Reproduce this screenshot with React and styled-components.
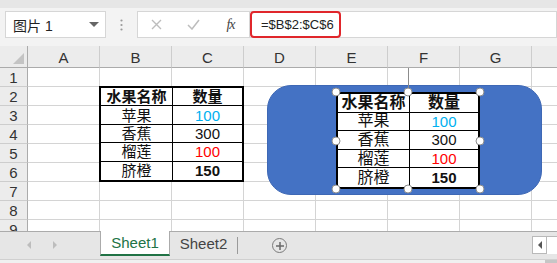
import React from "react";
import styled, { createGlobalStyle } from "styled-components";

const GlobalStyle = createGlobalStyle`
  body {
    margin: 0;
    background: #fff;
    font-family: "Liberation Sans", "Noto Sans CJK SC", sans-serif;
  }
`;

const Window = styled.div`
  width: 557px;
  height: 263px;
  overflow: hidden;
  display: flex;
  flex-direction: column;
  background: #f3f3f3;
`;

/* formula bar */
const FormulaBar = styled.div`
  height: 46px;
  box-sizing: border-box;
  border-top: 8px solid #e6e6e6;
  padding-top: 3px;
  display: flex;
  align-items: flex-start;
  flex-shrink: 0;
`;

const NameBox = styled.div`
  margin-left: 5px;
  width: 101px;
  height: 27px;
  box-sizing: border-box;
  background: #fff;
  border: 1px solid #d6d6d6;
  display: flex;
  align-items: center;
  padding: 0 6px 0 7px;
  font-size: 14px;
  color: #222;
`;

const Caret = styled.span`
  margin-left: auto;
  width: 0;
  height: 0;
  border-left: 5px solid transparent;
  border-right: 5px solid transparent;
  border-top: 5px solid #666;
`;

const Grip = styled.div`
  width: 31px;
  height: 27px;
  display: flex;
  align-items: center;
  justify-content: center;
`;

const FxGroup = styled.div`
  width: 113px;
  height: 27px;
  box-sizing: border-box;
  background: #fff;
  border: 1px solid #d6d6d6;
  display: grid;
  grid-template-columns: repeat(3, 1fr);
  align-items: center;
  justify-items: center;
`;

const Fx = styled.span`
  font-family: "Liberation Serif", serif;
  font-style: italic;
  font-size: 14px;
  color: #444;
  letter-spacing: -1px;
`;

const FormulaInput = styled.div`
  flex: 1;
  height: 27px;
  box-sizing: border-box;
  background: #fff;
  border: 1px solid #d6d6d6;
  border-left: none;
  display: flex;
  align-items: center;
`;

const Highlight = styled.span`
  height: 27px;
  width: 91px;
  box-sizing: border-box;
  margin-top: -1px;
  border: 2px solid #e0262b;
  border-radius: 4px;
  display: flex;
  align-items: center;
  padding-left: 9px;
  font-size: 13px;
  color: #222;
`;

/* sheet grid */
const Sheet = styled.div`
  position: relative;
  height: 185px;
  flex-shrink: 0;
  overflow: hidden;
  background: #fff;
  display: grid;
  grid-template-columns: 28px repeat(8, 72px);
  grid-template-rows: 22px repeat(9, 19px);
`;

const Corner = styled.div`
  grid-column: 1;
  grid-row: 1;
  background: #ececec;
  border-right: 1px solid #ababab;
  border-bottom: 1px solid #ababab;
  display: flex;
  align-items: flex-end;
  justify-content: flex-end;
  padding: 0 3px 3px 0;
`;

const ColHeader = styled.div`
  grid-row: 1;
  grid-column: ${(p) => p.$col};
  background: #ececec;
  border-right: 1px solid #cdcdcd;
  border-bottom: 1px solid #ababab;
  display: flex;
  align-items: flex-end;
  justify-content: center;
  padding-bottom: 1px;
  font-size: 15px;
  color: #333;
`;

const RowHeader = styled.div`
  grid-column: 1;
  grid-row: ${(p) => p.$row};
  background: #ececec;
  border-right: 1px solid #ababab;
  border-bottom: 1px solid #cdcdcd;
  display: flex;
  align-items: center;
  justify-content: center;
  font-size: 15px;
  color: #333;
`;

const Cell = styled.div`
  grid-column: ${(p) => p.$col};
  grid-row: ${(p) => p.$row};
  border-right: 1px solid #d4d4d4;
  border-bottom: 1px solid #d4d4d4;
`;

const TableArea = styled.div`
  grid-column: 3 / 5;
  grid-row: 3 / 8;
  margin: -1px 0 0 -1px;
  z-index: 1;
`;

const DataTable = styled.div`
  height: 100%;
  box-sizing: border-box;
  background: #fff;
  border: 2px solid #000;
  display: grid;
  grid-template-columns: ${(p) => p.$split} 1fr;
  grid-template-rows: repeat(5, 1fr);
`;

const DataCell = styled.div`
  display: flex;
  align-items: center;
  justify-content: center;
  border-bottom: ${(p) => (p.$last ? "none" : "1px solid #000")};
  border-right: ${(p) => (p.$first ? "1px solid #000" : "none")};
  font-size: ${(p) => p.$size}px;
  font-weight: ${(p) => (p.$bold ? 700 : 400)};
  color: ${(p) => p.$color || "#111"};
  line-height: 1;
`;

/* floating objects */
const Shape = styled.div`
  position: absolute;
  left: 267px;
  top: 39px;
  width: 275px;
  height: 110px;
  box-sizing: border-box;
  border-radius: 24px;
  background: #4472c4;
  border: 1px solid #3e68b5;
  z-index: 2;
`;

const RotateStem = styled.div`
  position: absolute;
  left: 408px;
  top: 22px;
  width: 1px;
  height: 24px;
  background: #8c8c8c;
  z-index: 3;
`;

const Picture = styled.div`
  position: absolute;
  left: 336px;
  top: 46px;
  width: 144px;
  height: 97px;
  background: #fff;
  z-index: 3;
`;

const Handle = styled.span`
  position: absolute;
  left: ${(p) => p.$x}%;
  top: ${(p) => p.$y}%;
  width: 9px;
  height: 9px;
  box-sizing: border-box;
  border-radius: 50%;
  background: #fff;
  border: 1.5px solid #8c8c8c;
  transform: translate(-50%, -50%);
  z-index: 4;
`;

/* sheet tabs */
const TabBar = styled.div`
  height: 27px;
  flex-shrink: 0;
  border-top: 1px solid #ababab;
  background: #e6e6e6;
  display: flex;
  align-items: flex-start;
`;

const Nav = styled.div`
  width: 100px;
  height: 26px;
  display: flex;
  align-items: center;
  gap: 22px;
  padding-left: 27px;
  box-sizing: border-box;
`;

const Tab = styled.div`
  width: ${(p) => p.$w}px;
  height: ${(p) => (p.$active ? 25 : 24)}px;
  margin-top: -1px;
  box-sizing: border-box;
  display: flex;
  align-items: center;
  justify-content: center;
  font-size: 15px;
  color: ${(p) => (p.$active ? "#217346" : "#444")};
  background: ${(p) => (p.$active ? "#fff" : "transparent")};
  border-left: ${(p) => (p.$active ? "1px solid #ababab" : "none")};
  border-right: 1px solid ${(p) => (p.$active ? "#ababab" : "#9a9a9a")};
  border-bottom: ${(p) => (p.$active ? "2px solid #217346" : "none")};
`;

const TabSep = styled.div`
  width: 1px;
  height: 17px;
  margin-top: 5px;
  background: #9a9a9a;
`;

const AddSheet = styled.div`
  margin-left: 34px;
  margin-top: 6px;
  width: 15px;
  height: 15px;
  box-sizing: border-box;
  border-radius: 50%;
  border: 1.5px solid #7a7a7a;
  display: flex;
  align-items: center;
  justify-content: center;
`;

const ScrollBtn = styled.div`
  margin-left: auto;
  margin-top: 4px;
  width: 15px;
  height: 18px;
  box-sizing: border-box;
  background: #fff;
  border: 1px solid #b9b9b9;
  display: flex;
  align-items: center;
  justify-content: center;
`;

const ScrollTrack = styled.div`
  width: 10px;
  height: 18px;
  margin-top: 4px;
  background: #fff;
  border-top: 1px solid #b9b9b9;
  box-sizing: border-box;
`;

const StatusStrip = styled.div`
  flex: 1;
  background: #f0f0f0;
  border-top: 1px solid #d0d0d0;
  display: flex;
  justify-content: flex-end;
`;

const Thumb = styled.div`
  width: 12px;
  background: #c6c6c6;
`;

const LeftTri = styled.span`
  width: 0;
  height: 0;
  border-top: 4px solid transparent;
  border-bottom: 4px solid transparent;
  border-right: 4px solid ${(p) => p.$c || "#555"};
`;

const RightTri = styled.span`
  width: 0;
  height: 0;
  border-top: 4px solid transparent;
  border-bottom: 4px solid transparent;
  border-left: 4px solid ${(p) => p.$c || "#555"};
`;

const columns = ["A", "B", "C", "D", "E", "F", "G", "H"];
const rowNums = [1, 2, 3, 4, 5, 6, 7, 8, 9];

const fruits = [
  { name: "水果名称", qty: "数量", header: true },
  { name: "苹果", qty: "100", color: "#00b0f0" },
  { name: "香蕉", qty: "300" },
  { name: "榴莲", qty: "100", color: "#ff0000" },
  { name: "脐橙", qty: "150", bold: true },
];

const handles = [
  [0, 0], [50, 0], [100, 0],
  [0, 50], [100, 50],
  [0, 100], [50, 100], [100, 100],
];

const FruitTable = ({ split, cjkSize, numSize }) => (
  <DataTable $split={split}>
    {fruits.map((f, i) => (
      <React.Fragment key={i}>
        <DataCell
          $first
          $last={i === fruits.length - 1}
          $size={cjkSize}
          $bold={f.header}
        >
          {f.name}
        </DataCell>
        <DataCell
          $last={i === fruits.length - 1}
          $size={f.header ? cjkSize : numSize}
          $bold={f.header || f.bold}
          $color={f.color}
        >
          {f.qty}
        </DataCell>
      </React.Fragment>
    ))}
  </DataTable>
);

const App = () => (
  <>
    <GlobalStyle />
    <Window>
      <FormulaBar>
        <NameBox>
          图片 1
          <Caret />
        </NameBox>
        <Grip>
          <svg width="3" height="12" viewBox="0 0 3 12">
            <circle cx="1.5" cy="1.5" r="1.1" fill="#9a9a9a" />
            <circle cx="1.5" cy="6" r="1.1" fill="#9a9a9a" />
            <circle cx="1.5" cy="10.5" r="1.1" fill="#9a9a9a" />
          </svg>
        </Grip>
        <FxGroup>
          <svg width="11" height="11" viewBox="0 0 11 11">
            <path d="M1 1 L10 10 M10 1 L1 10" stroke="#bdbdbd" strokeWidth="1.4" />
          </svg>
          <svg width="13" height="11" viewBox="0 0 13 11">
            <path d="M1 6 L5 10 L12 1" stroke="#bdbdbd" strokeWidth="1.5" fill="none" />
          </svg>
          <Fx>fx</Fx>
        </FxGroup>
        <FormulaInput>
          <Highlight>=$B$2:$C$6</Highlight>
        </FormulaInput>
      </FormulaBar>

      <Sheet>
        <Corner>
          <svg width="11" height="11" viewBox="0 0 11 11">
            <path d="M11 0 L11 11 L0 11 Z" fill="#c4c4c4" />
          </svg>
        </Corner>
        {columns.map((c, i) => (
          <ColHeader key={c} $col={i + 2}>
            {c}
          </ColHeader>
        ))}
        {rowNums.map((r) => (
          <React.Fragment key={r}>
            <RowHeader $row={r + 1}>{r}</RowHeader>
            {columns.map((c, i) => (
              <Cell key={c} $col={i + 2} $row={r + 1} />
            ))}
          </React.Fragment>
        ))}
        <TableArea>
          <FruitTable split="72px" cjkSize={15} numSize={15} />
        </TableArea>

        <Shape />
        <RotateStem />
        <Picture>
          <FruitTable split="72px" cjkSize={16} numSize={15} />
          {handles.map(([x, y], i) => (
            <Handle key={i} $x={x} $y={y} />
          ))}
        </Picture>
      </Sheet>

      <TabBar>
        <Nav>
          <LeftTri $c="#bdbdbd" />
          <RightTri $c="#bdbdbd" />
        </Nav>
        <Tab $active $w={70}>Sheet1</Tab>
        <Tab $w={67} style={{ borderRight: "none" }}>Sheet2</Tab>
        <TabSep />
        <AddSheet>
          <svg width="8" height="8" viewBox="0 0 8 8">
            <path d="M4 0 V8 M0 4 H8" stroke="#6a6a6a" strokeWidth="1.5" />
          </svg>
        </AddSheet>
        <ScrollBtn>
          <LeftTri $c="#555" />
        </ScrollBtn>
        <ScrollTrack />
      </TabBar>
      <StatusStrip>
        <Thumb />
      </StatusStrip>
    </Window>
  </>
);

export default App;
